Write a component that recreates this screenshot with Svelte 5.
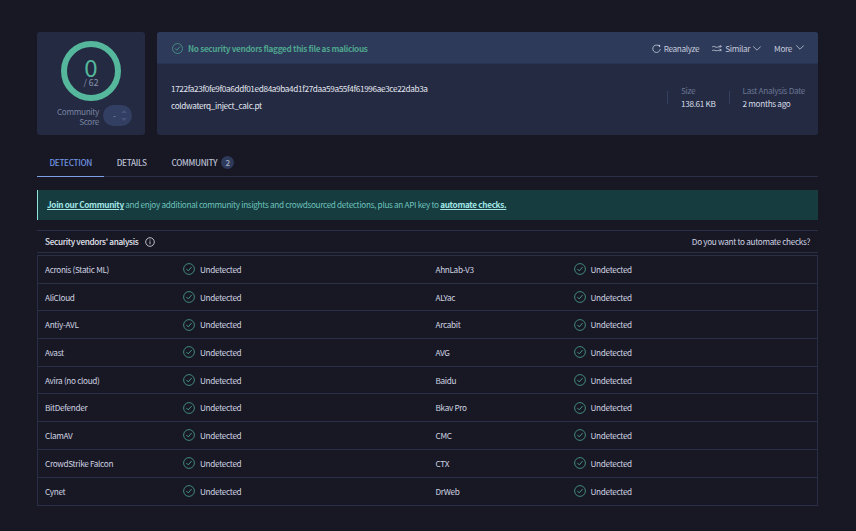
<script lang="ts">
	const vendors = [
		['Acronis (Static ML)', 'AhnLab-V3'],
		['AliCloud', 'ALYac'],
		['Antiy-AVL', 'Arcabit'],
		['Avast', 'AVG'],
		['Avira (no cloud)', 'Baidu'],
		['BitDefender', 'Bkav Pro'],
		['ClamAV', 'CMC'],
		['CrowdStrike Falcon', 'CTX'],
		['Cynet', 'DrWeb'],
	];
</script>

{#snippet check(size: number)}
	<svg class="check" width={size} height={size} viewBox="0 0 16 16" fill="none" stroke="currentColor">
		<circle cx="8" cy="8" r="7.2" stroke-width="1.1" />
		<path d="M4.8 8.3l2.2 2.2 4.2-4.8" stroke-width="1.2" stroke-linecap="round" stroke-linejoin="round" />
	</svg>
{/snippet}

{#snippet chevron()}
	<svg class="chev" width="8" height="5" viewBox="0 0 8 5" fill="none" stroke="currentColor" stroke-width="0.8">
		<path d="M0.5 0.7l3.5 3.5 3.5-3.5" stroke-linecap="round" stroke-linejoin="round" />
	</svg>
{/snippet}

<div class="page">
	<div class="top">
		<div class="score">
			<div class="ring">
				<span class="zero">0</span>
				<span class="total">/ 62</span>
			</div>
			<div class="community">
				<span class="label">Community<br />Score</span>
				<div class="vote">
					<span class="dot">-</span>
					<div class="arrows"><i class="up"></i><i class="down"></i></div>
				</div>
			</div>
		</div>

		<div class="card">
			<div class="card-head">
				<div class="verdict">
					{@render check(11)}
					<span>No security vendors flagged this file as malicious</span>
				</div>
				<div class="actions">
					<span class="action">
						<svg width="9" height="9" viewBox="0 0 10 10" fill="none" stroke="currentColor" stroke-width="0.9">
							<path d="M8.6 3A4.2 4.2 0 1 0 9.2 6" stroke-linecap="round" />
							<path d="M6.6 0.9l2.4 0.1 0 2.5" fill="currentColor" stroke="none" />
						</svg>
						Reanalyze
					</span>
					<span class="action similar">
						<svg width="10" height="7" viewBox="0 0 10 7" fill="none" stroke="currentColor" stroke-width="0.8">
							<path d="M0.5 1.6C2.5 0.4 3.5 3 5.5 2.2c1-.4 2-.9 2.6-.8M8 0.5l1.5 0.9L8 2.2" stroke-linecap="round" />
							<path d="M0.5 5.4C2.5 4.2 3.5 6.4 5.5 5.6c1-.4 2-.6 2.6-.5M8 4.2l1.5 0.9L8 6" stroke-linecap="round" />
						</svg>
						Similar {@render chevron()}
					</span>
					<span class="action more">More {@render chevron()}</span>
				</div>
			</div>
			<div class="card-body">
				<div class="file">
					<div class="hash">1722fa23f0fe9f0a6ddf01ed84a9ba4d1f27daa59a55f4f61996ae3ce22dab3a</div>
					<div>coldwaterq_inject_calc.pt</div>
				</div>
				<i class="sep"></i>
				<div class="meta">
					<span class="muted">Size</span>
					<span>138.61 KB</span>
				</div>
				<i class="sep"></i>
				<div class="meta">
					<span class="muted">Last Analysis Date</span>
					<span>2 months ago</span>
				</div>
			</div>
		</div>
	</div>

	<nav class="tabs">
		<span class="tab active">DETECTION</span>
		<span class="tab">DETAILS</span>
		<span class="tab">COMMUNITY <b class="badge">2</b></span>
	</nav>

	<div class="banner">
		<span><a href="#join">Join our Community</a> and enjoy additional community insights and crowdsourced detections, plus an API key to <a href="#automate">automate checks.</a></span>
	</div>

	<div class="section-head">
		<div class="section-title">
			<span>Security vendors' analysis</span>
			<svg width="10" height="10" viewBox="0 0 10 10" fill="none" stroke="currentColor" stroke-width="0.8">
				<circle cx="5" cy="5" r="4.3" />
				<path d="M5 4.4v2.8" />
				<circle cx="5" cy="2.9" r="0.5" fill="currentColor" stroke="none" />
			</svg>
		</div>
		<span class="automate">Do you want to automate checks?</span>
	</div>

	<div class="table">
		{#each vendors as row}
			<div class="row">
				{#each row as name}
					<div class="cell">
						<span class="name">{name}</span>
						<span class="result">{@render check(12)} Undetected</span>
					</div>
				{/each}
			</div>
		{/each}
	</div>
</div>

<style>
	:global(body) {
		margin: 0;
		background: #181825;
		color: #d8dce8;
		font-family: "Noto Sans CJK SC", "Noto Sans", sans-serif;
		font-size: 8.2px;
		letter-spacing: -0.32px;
		line-height: 11px;
		overflow: hidden;
	}

	.page {
		height: 531px;
		box-sizing: border-box;
		padding: 32px 38px 0 37px;
	}

	.top {
		display: flex;
		gap: 12px;
		height: 102.5px;
	}

	.score {
		width: 108px;
		flex: none;
		box-sizing: border-box;
		padding-top: 8.5px;
		background: #232a42;
		border-radius: 3px;
		display: flex;
		flex-direction: column;
		align-items: center;
	}

	.ring {
		width: 60px;
		height: 60px;
		box-sizing: border-box;
		border: 6px solid #55b79b;
		border-radius: 50%;
		padding-top: 3px;
		display: flex;
		flex-direction: column;
		align-items: center;
		justify-content: center;
	}

	.zero {
		color: #55b79b;
		font-size: 24px;
		letter-spacing: 0;
		line-height: 21px;
	}

	.total {
		color: #8d95ad;
		font-size: 8.6px;
		letter-spacing: 0;
		line-height: 11px;
	}

	.community {
		align-self: flex-end;
		display: flex;
		align-items: center;
		gap: 4px;
		margin-top: 4.5px;
		margin-right: 13px;
	}

	.label {
		color: #79829f;
		text-align: right;
		line-height: 10px;
		margin-top: 1px;
	}

	.vote {
		width: 29px;
		height: 21px;
		background: #323e62;
		border-radius: 11px;
		display: flex;
		align-items: center;
		justify-content: space-between;
		box-sizing: border-box;
		padding: 0 5px 0 10px;
		color: #8d95ad;
	}

	.arrows {
		display: flex;
		flex-direction: column;
		gap: 5px;
	}

	.arrows i {
		display: block;
		width: 0;
		height: 0;
		border-left: 3px solid transparent;
		border-right: 3px solid transparent;
	}

	.up { border-bottom: 3px solid #46517a; }
	.down { border-top: 3px solid #46517a; }

	.card {
		flex: 1;
		background: #232a42;
		border-radius: 3px;
		overflow: hidden;
		display: flex;
		flex-direction: column;
	}

	.card-head {
		height: 32px;
		flex: none;
		box-sizing: border-box;
		padding: 1px 14px 0 15px;
		background: #2d3a5a;
		border-bottom: 1px solid #283352;
		display: flex;
		align-items: center;
		justify-content: space-between;
	}

	.verdict {
		display: flex;
		align-items: center;
		gap: 5px;
		color: #4fa58d;
		font-weight: 700;
	}

	.verdict .check { color: #4fa58d; }

	.actions {
		display: flex;
		align-items: center;
		color: #c6cbdb;
	}

	.action {
		display: flex;
		align-items: center;
		gap: 3px;
	}

	.similar { margin-left: 13px; }
	.more { margin-left: 13px; gap: 4px; }
	.chev { margin-top: 1px; }
	.more .chev { margin-top: -1px; }

	.card-body {
		flex: 1;
		display: flex;
		align-items: center;
		gap: 13px;
		padding: 0 13px 0 14px;
	}

	.file {
		flex: 1;
		display: flex;
		flex-direction: column;
		gap: 6px;
		color: #e4e7f0;
		margin-top: -5px;
	}

	.hash { letter-spacing: -0.36px; }

	.sep {
		width: 1px;
		height: 13px;
		background: #33405f;
		margin-top: -4px;
	}

	.meta {
		display: flex;
		flex-direction: column;
		gap: 2px;
		margin-top: -4px;
	}

	.muted { color: #6b7592; }

	.tabs {
		display: flex;
		margin-top: 12.5px;
		height: 30px;
		box-sizing: border-box;
		border-bottom: 1px solid #2a2f48;
		font-weight: 500;
		color: #b9bfd0;
	}

	.tab {
		height: 30px;
		box-sizing: border-box;
		padding: 1px 12.4px 0;
		display: flex;
		align-items: center;
		gap: 4px;
	}

	.active {
		color: #6f93e0;
		border-bottom: 1px solid #7da0e6;
	}

	.badge {
		width: 13px;
		height: 13px;
		border-radius: 50%;
		background: #2d3a5a;
		color: #a6aec4;
		display: inline-flex;
		align-items: center;
		justify-content: center;
		font-weight: 500;
	}

	.banner {
		margin-top: 13px;
		height: 29.5px;
		box-sizing: border-box;
		background: #163c40;
		border-left: 1px solid #8fe3dc;
		color: #6fc2bb;
		display: flex;
		align-items: center;
		padding-left: 9px;
	}

	.banner a {
		color: #a2e6e6;
		font-weight: 700;
		text-decoration: underline;
	}

	.section-head {
		margin-top: 10.5px;
		height: 23px;
		box-sizing: border-box;
		border-top: 1px solid #2a2f48;
		border-bottom: 1px solid #2a2f48;
		display: flex;
		align-items: center;
		justify-content: space-between;
		padding: 0 8px;
		color: #e4e7f0;
	}

	.section-title {
		display: flex;
		align-items: center;
		gap: 7px;
		font-weight: 500;
	}

	.automate {
		color: #cfd3e0;
	}

	.table {
		margin-top: 2px;
		border: 1px solid #2a2f48;
	}

	.row {
		display: grid;
		grid-template-columns: 390.5px 1fr;
		height: 27.7px;
		box-sizing: border-box;
		border-bottom: 1px solid #2a2f48;
	}

	.row:last-child { border-bottom: none; }

	.cell {
		display: grid;
		grid-template-columns: 138px 1fr;
		align-items: center;
		padding-left: 7px;
		color: #cfd3e0;
	}

	.result {
		display: flex;
		align-items: center;
		gap: 5px;
	}

	.result .check { color: #4a9f88; }
</style>
